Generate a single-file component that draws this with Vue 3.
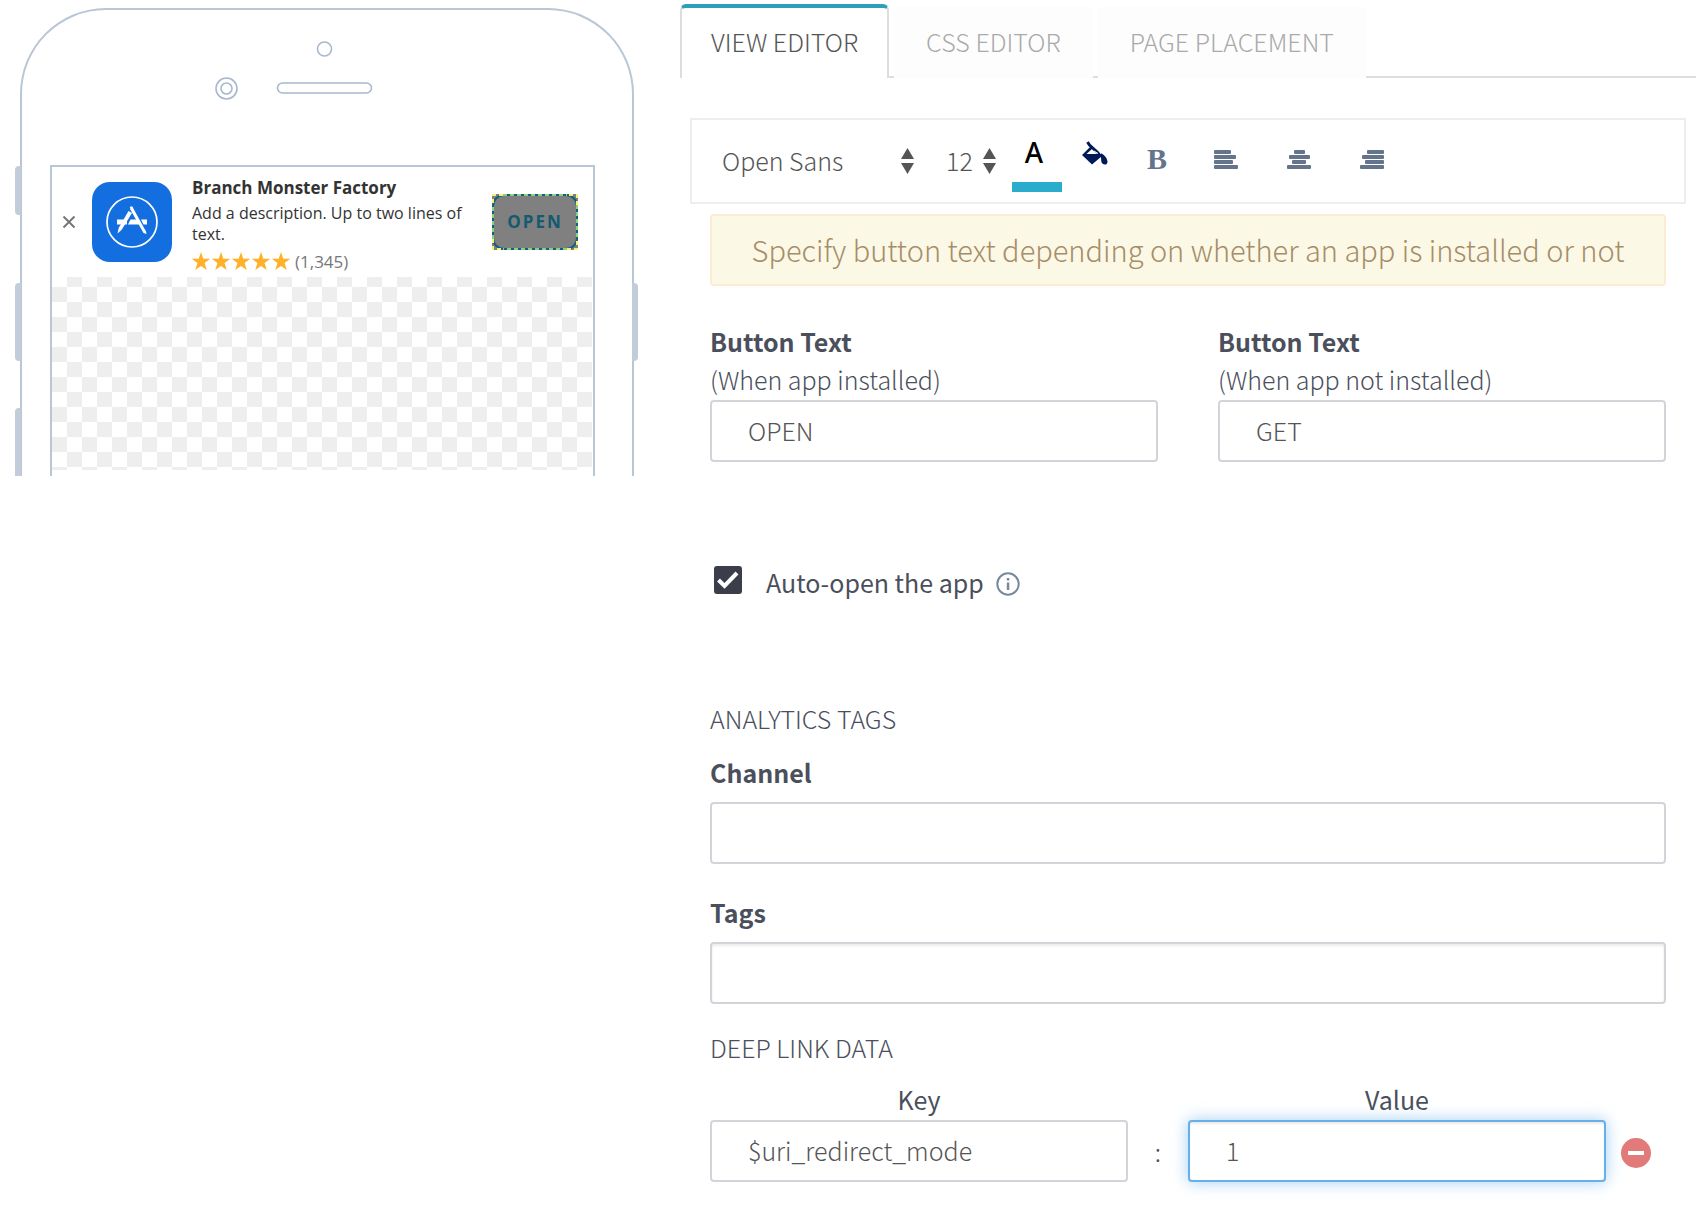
<script setup>
import { ref } from 'vue'

const tabs = ['VIEW EDITOR', 'CSS EDITOR', 'PAGE PLACEMENT']
const activeTab = ref('VIEW EDITOR')
const font = ref('Open Sans')
const size = ref('12')
const openText = ref('OPEN')
const getText = ref('GET')
const autoOpen = ref(true)
const channel = ref('')
const tags = ref('')
const linkKey = ref('$uri_redirect_mode')
const linkValue = ref('1')
const alignments = [
  { name: 'left', bars: [[0, 17], [0, 22], [0, 19], [0, 24]] },
  { name: 'center', bars: [[7, 11], [2, 21], [5, 14], [0, 24]] },
  { name: 'right', bars: [[7, 17], [2, 22], [5, 19], [0, 24]] }
]
</script>

<template>
  <div class="page">
    <aside class="preview">
      <div class="phone">
        <span class="side-key mute"></span>
        <span class="side-key volume-up"></span>
        <span class="side-key volume-down"></span>
        <span class="side-key power"></span>
        <svg class="sensors" viewBox="0 0 170 66" aria-hidden="true">
          <g fill="none" stroke="#a9b8cc" stroke-width="1.6">
            <circle cx="109.500" cy="9" r="7" />
            <circle cx="11.500" cy="48.500" r="10.500" />
            <circle cx="11.500" cy="48.500" r="5.500" />
            <rect x="62.500" y="43" width="94" height="10" rx="5" />
          </g>
        </svg>
        <div class="screen">
          <div class="banner">
            <button class="close" type="button" aria-label="Close">
              <svg viewBox="0 0 14 14" width="14" height="14"><path d="M1.500 1.500l11 11M12.500 1.500l-11 11" stroke="#777" stroke-width="2" /></svg>
            </button>
            <svg class="app-icon" viewBox="0 0 80 80" aria-hidden="true">
              <rect width="80" height="80" rx="18" fill="#136fe0" />
              <circle cx="40" cy="40" r="25" fill="none" stroke="#fff" stroke-width="1.700" />
              <path d="M25 37.500h10v5h-10zM38.500 37.500h7l2.500 5h-12zM49 37.500h6v5h-3.500z" fill="#fff" />
              <path d="M38 27l2-3 14 25.500.500 2.500-3-1z" fill="#fff" />
              <path d="M36.500 29l3.500 2-10.500 17-4 3.500 1.200-5.500z" fill="#fff" />
              <path d="M38.200 25l2.500 1.500" stroke="#fff" stroke-width="2" />
            </svg>
            <div class="app-info">
              <h2>Branch Monster Factory</h2>
              <p>Add a description. Up to two lines of text.</p>
              <div class="rating">
                <svg viewBox="0 0 98 19" width="98" height="19" role="img" aria-label="5 stars">
                  <path v-for="n in 5" :key="n" :transform="`translate(${(n - 1) * 20} 0)`" d="M9 0l2.300 6.800h6.900l-5.600 4.300 2.100 7L9 14l-5.700 4.100 2.100-7L-.200 6.800h6.900z" fill="#ffb129" />
                </svg>
                <span>(1,345)</span>
              </div>
            </div>
            <button class="open" type="button">
              <svg class="selection" viewBox="0 0 86 56" aria-hidden="true">
                <g fill="none" stroke-width="2">
                  <rect x="1" y="1" width="84" height="54" rx="11" stroke="#14607a" />
                  <path d="M11 1h64M85 11v34M75 55H11M1 45V11" stroke="#8fcf7c" stroke-dasharray="4 3" />
                  <path d="M1 11V1h10M75 1h10v10M85 45v10H75M11 55H1V45" stroke="#f7ee80" stroke-dasharray="4 3" stroke-dashoffset="-2" />
                </g>
              </svg>
              OPEN
            </button>
          </div>
          <div class="checker"></div>
        </div>
      </div>
    </aside>

    <main class="editor">
      <nav class="tabs" role="tablist">
        <button v-for="t in tabs" :key="t" type="button" role="tab" class="tab" :class="{ active: t === activeTab }" :aria-selected="t === activeTab" @click="activeTab = t">{{ t }}</button>
      </nav>

      <div class="toolbar">
        <label class="picker family">
          <select v-model="font" aria-label="Font family"><option>Open Sans</option><option>Roboto</option></select>
          <svg viewBox="0 0 13 26" width="13" height="26"><path d="M6.500 0L13 11H0zM0 15h13L6.500 26z" fill="#555" /></svg>
        </label>
        <label class="picker size">
          <select v-model="size" aria-label="Font size"><option>12</option><option>14</option></select>
          <svg viewBox="0 0 13 26" width="13" height="26"><path d="M6.500 0L13 11H0zM0 15h13L6.500 26z" fill="#555" /></svg>
        </label>
        <button class="color" type="button" aria-label="Text color"><span>A</span><i></i></button>
        <button class="tool fill" type="button" aria-label="Background color">
          <svg viewBox="0 0 26 24" width="26" height="24">
            <path d="M9 5L0 14l10 9.500 9.500-8zM10.500 7.500L16.500 13H4.500z" fill="#001a57" fill-rule="evenodd" />
            <path d="M5.500 1l2 3L19 14.500" fill="none" stroke="#001a57" stroke-width="3" />
            <path d="M17 11.500c4 1 8.500 5 8.500 9.500 0 3.500-5.500 3.500-6.200-.500-.300-3.500.200-5-2.300-9z" fill="#001a57" />
            <path d="M12 10l4 2.500M16.500 9l2.500 4" stroke="#fff" stroke-width="1" />
          </svg>
        </button>
        <button class="tool bold" type="button" aria-label="Bold">B</button>
        <button v-for="a in alignments" :key="a.name" class="tool" type="button" :aria-label="`Align ${a.name}`">
          <svg viewBox="0 0 24 19" width="24" height="19">
            <rect v-for="(b, i) in a.bars" :key="i" :x="b[0]" :y="i * 5" :width="b[1]" height="4" rx="1" fill="#64748b" />
          </svg>
        </button>
      </div>

      <div class="content">
        <p class="notice">Specify button text depending on whether an app is installed or not</p>

        <div class="button-texts">
          <label class="field"><strong>Button Text</strong><span>(When app installed)</span><input v-model="openText" type="text" /></label>
          <label class="field"><strong>Button Text</strong><span>(When app not installed)</span><input v-model="getText" type="text" /></label>
        </div>

        <div class="auto-open">
          <input id="auto" v-model="autoOpen" type="checkbox" />
          <label for="auto">Auto-open the app</label>
          <svg viewBox="0 0 24 24" width="24" height="24" aria-hidden="true">
            <circle cx="12" cy="12" r="10.700" fill="none" stroke="#7a8899" stroke-width="2" />
            <path d="M10.800 6h2.500v2.500h-2.500zM10.800 10.500h2.500V18h-2.500z" fill="#7a8899" />
          </svg>
        </div>

        <h3>ANALYTICS TAGS</h3>
        <div class="analytics">
          <label class="field wide"><strong>Channel</strong><input v-model="channel" type="text" /></label>
          <label class="field wide"><strong>Tags</strong><input v-model="tags" class="inset" type="text" /></label>
        </div>

        <h3>DEEP LINK DATA</h3>
        <div class="pairs">
          <label for="key">Key</label>
          <label for="value" class="value-label">Value</label>
          <input id="key" v-model="linkKey" type="text" />
          <span class="colon">:</span>
          <input id="value" v-model="linkValue" class="focused" type="text" />
          <button class="remove" type="button" aria-label="Remove">
            <svg viewBox="0 0 30 30" width="30" height="30"><circle cx="15" cy="15" r="15" fill="#e27a7a" /><path d="M7 13h16v4H7z" fill="#fff" /></svg>
          </button>
        </div>
      </div>
    </main>
  </div>
</template>

<style>
body {
  background: #fff;
}
</style>

<style scoped>
* {
  box-sizing: border-box;
}
.page {
  display: flex;
  align-items: flex-start;
  color: #4b4f5c;
  font: 300 25px/38px "Noto Sans CJK SC", "Noto Sans", sans-serif;
}
h2, h3, p {
  margin: 0;
  font-weight: inherit;
  font-size: inherit;
}
button {
  padding: 0;
  border: 0;
  background: none;
  color: inherit;
  font: inherit;
}
svg {
  display: block;
  flex: none;
}

/* phone preview */
.preview {
  flex: 0 0 680px;
  padding: 8px 46px 0 20px;
  font-family: "Open Sans", "Noto Sans", sans-serif;
}
.phone {
  position: relative;
  height: 468px;
  padding: 30px 37px 0 28px;
  border: 2px solid #b9c6d6;
  border-bottom: 0;
  border-radius: 86px 86px 0 0;
}
.side-key {
  position: absolute;
  left: -7px;
  width: 6px;
  border-radius: 4px 0 0 4px;
  background: #c2cdd9;
}
.mute { top: 156px; height: 49px; }
.volume-up { top: 273px; height: 78px; }
.volume-down { top: 398px; height: 68px; border-bottom-left-radius: 0; }
.power { top: 273px; right: -6px; left: auto; height: 78px; border-radius: 0 4px 4px 0; }
.sensors {
  width: 170px;
  height: 66px;
  margin: 0 0 59px 165px;
}
.screen {
  height: 311px;
  border: 2px solid #b9c6d6;
  border-bottom: 0;
}
.banner {
  display: flex;
  height: 110px;
  padding: 0 15px 0 10px;
}
.close {
  align-self: center;
  margin-right: 16px;
}
.app-icon {
  width: 80px;
  height: 80px;
  margin: 15px 20px 0 0;
}
.app-info {
  flex: 1;
  padding-top: 10px;
  color: #333;
  font-weight: 400;
  font-size: 16px;
  line-height: 21px;
}
.app-info h2 {
  margin-bottom: 5px;
  font-weight: 700;
  font-size: 17px;
}
.app-info p {
  padding-right: 20px;
}
.rating {
  display: flex;
  align-items: center;
  gap: 5px;
  margin-top: 6px;
  color: #777;
  font-size: 17px;
}
.open {
  position: relative;
  flex: none;
  align-self: center;
  width: 86px;
  height: 56px;
  background: #808080;
  color: #145a70;
  font-weight: 700;
  font-size: 17px;
  letter-spacing: 2px;
}
.selection {
  position: absolute;
  inset: 0;
  width: 86px;
  height: 56px;
}
.checker {
  height: 193px;
  margin-right: 1px;
  background: repeating-conic-gradient(#fff 0 25%, #eee 0 50%) 0 -20px / calc(100% / 18) 30px;
}

/* editor */
.editor {
  flex: 1;
  min-width: 0;
  padding: 4px 10px 32px 0;
}
.tabs {
  display: flex;
  align-items: flex-end;
  gap: 5px;
  height: 74px;
  border-bottom: 2px solid #ddd;
}
.tab {
  height: 72px;
  margin-bottom: -2px;
  padding: 0 32px 2px;
  border-radius: 6px 6px 0 0;
  background: #fdfdfd;
  color: #aaa;
}
.tab.active {
  height: 74px;
  padding: 0 29px 4px;
  border: solid #ddd;
  border-width: 4px 2px 0;
  border-top-color: #2f9fb8;
  background: #fff;
  color: #555;
}
.toolbar {
  display: flex;
  align-items: center;
  height: 86px;
  margin: 40px 10px 10px;
  padding-left: 30px;
  border: 2px solid #eee;
}
.picker {
  display: flex;
  align-items: center;
}
.picker select {
  flex: 1;
  min-width: 0;
  padding: 0 0 2px;
  border: 0;
  outline: 0;
  background: none;
  color: #555;
  font: inherit;
  appearance: none;
}
.family {
  width: 192px;
  margin-right: 32px;
}
.size {
  width: 50px;
  margin-right: 16px;
}
.color {
  width: 50px;
  margin-right: 20px;
  padding-top: 4px;
  color: #000;
  font: 500 28px/36px "Noto Sans", sans-serif;
}
.color span {
  display: block;
  margin-right: 6px;
}
.color i {
  display: block;
  height: 10px;
  margin-top: 12px;
  background: #2caccd;
}
.tool {
  width: 24px;
  margin: 0 49px 4px 0;
}
.fill {
  width: 26px;
  margin: 0 37px 16px 0;
}
.bold {
  margin-right: 45px;
  color: #64748b;
  font: 700 30px/38px "Liberation Serif", serif;
}
.content {
  padding: 0 30px;
}
.notice {
  padding: 14px 20px 16px;
  border: 2px solid #fcecd3;
  border-radius: 4px;
  background: #fcf8e6;
  color: #a68d67;
  font-size: 29px;
  text-align: center;
}
.button-texts {
  display: grid;
  grid-template-columns: 1fr 1fr;
  gap: 60px;
  margin-top: 36px;
}
.field {
  display: flex;
  flex-direction: column;
}
.field span {
  padding-bottom: 2px;
}
strong {
  font-weight: 700;
}
input[type="text"] {
  width: 100%;
  min-width: 0;
  height: 62px;
  padding: 0 36px 2px;
  border: 2px solid #d3d3da;
  border-radius: 4px;
  outline: 0;
  background: #fff;
  color: #555;
  font: inherit;
}
.auto-open {
  display: flex;
  align-items: center;
  margin: 101px 0 98px;
  padding-left: 4px;
  font-weight: 400;
}
.auto-open input {
  width: 28px;
  height: 28px;
  margin: 0 24px 4px 0;
  border-radius: 3px;
  background: #3b3d4a url("data:image/svg+xml,%3Csvg xmlns='http://www.w3.org/2000/svg' viewBox='0 0 28 28'%3E%3Cpath d='M4.500 14l6 6L23 7' fill='none' stroke='white' stroke-width='4'/%3E%3C/svg%3E");
  appearance: none;
}
.auto-open svg {
  margin: 4px 0 0 12px;
}
.analytics {
  display: flex;
  flex-direction: column;
  gap: 21px;
  margin: 8px 0 24px;
}
.wide strong {
  padding: 8px 0 11px;
}
.inset {
  box-shadow: inset 0 2px 3px rgba(0, 0, 0, 0.08);
}
.pairs {
  display: grid;
  grid-template-columns: 1fr 60px 1fr 60px;
  align-items: center;
  margin-top: 14px;
  text-align: center;
}
.pairs label {
  padding-bottom: 2px;
  font-weight: 400;
}
.pairs .value-label {
  grid-column: 3 / 5;
  padding-right: 60px;
}
.pairs #key {
  grid-column: 1;
}
.pairs .focused {
  border-color: #66afe9;
  box-shadow: 0 0 16px rgba(102, 175, 233, 0.6), inset 0 2px 2px rgba(0, 0, 0, 0.08);
}
.remove {
  justify-self: center;
  padding-top: 4px;
}
</style>
